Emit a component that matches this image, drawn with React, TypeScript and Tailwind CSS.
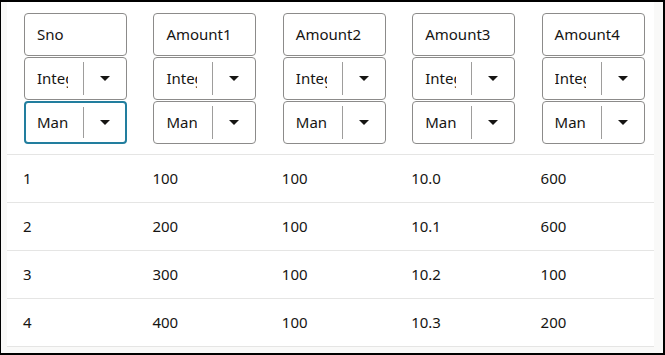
import React from "react";

const COLUMNS = ["Sno", "Amount1", "Amount2", "Amount3", "Amount4"];

const ROWS: string[][] = [
  ["1", "100", "100", "10.0", "600"],
  ["2", "200", "100", "10.1", "600"],
  ["3", "300", "100", "10.2", "100"],
  ["4", "400", "100", "10.3", "200"],
];

function Caret() {
  return (
    <svg width="10" height="5" viewBox="0 0 10 5" aria-hidden="true">
      <polygon points="0,0 10,0 5,5" fill="#161513" />
    </svg>
  );
}

function SelectBox({ value, focused }: { value: string; focused?: boolean }) {
  return (
    <div
      className={
        focused
          ? "flex h-[43px] w-[103px] items-stretch rounded-[4px] border-2 border-[#227e9e] bg-white"
          : "flex h-[43px] w-[103px] items-stretch rounded-[4px] border border-[#8c8b8a] bg-white"
      }
    >
      <div
        className={
          focused
            ? "flex w-[57px] items-center overflow-hidden pl-[11px] pr-[15px]"
            : "flex w-[58px] items-center overflow-hidden pl-[12px] pr-[15px]"
        }
      >
        <span className="block w-[31px] overflow-hidden whitespace-nowrap">{value}</span>
      </div>
      <div className="my-[4px] w-px bg-[#9e9d9c]" />
      <div className="flex flex-1 items-center justify-center">
        <Caret />
      </div>
    </div>
  );
}

export default function App() {
  return (
    <div
      className="flex h-[355px] w-[665px] border-t-2 border-r-2 border-b-2 border-l border-black bg-[#f9f9f8] pl-[6px] pr-[9px] pb-[6px] text-[15px] text-[#161513]"
      style={{ fontFamily: '"Noto Sans", "Open Sans", sans-serif' }}
    >
      <div className="w-[647px] bg-white">
        <div className="grid h-[153px] grid-cols-5 border-b border-[#e5e5e4]">
          {COLUMNS.map((name, i) => (
            <div key={name} className="flex flex-col gap-[1px] pl-[17px] pt-[11px]">
              <div className="flex h-[43px] w-[103px] items-center rounded-[4px] border border-[#8c8b8a] pl-[12px]">
                {name}
              </div>
              <SelectBox value="Integer" />
              <SelectBox value="Manual" focused={i === 0} />
            </div>
          ))}
        </div>
        {ROWS.map((row, r) => (
          <div key={r} className="grid h-[48px] grid-cols-5 items-center border-b border-[#e5e5e4]">
            {row.map((cell, c) => (
              <div key={c} className="pl-[16px]">
                {cell}
              </div>
            ))}
          </div>
        ))}
      </div>
    </div>
  );
}
